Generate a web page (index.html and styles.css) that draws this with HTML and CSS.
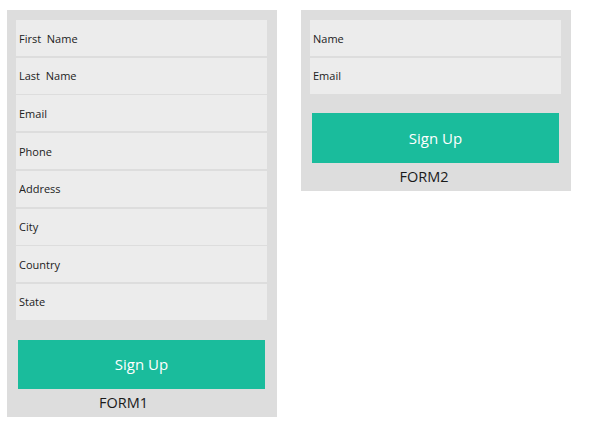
FILE: index.html
```html
<!DOCTYPE html>
<html>
<head>
<meta charset="utf-8">
<link rel="stylesheet" href="styles.css">
</head>
<body>
<div class="page">
  <form class="panel">
    <div class="fields">
      <input class="field" type="text" placeholder="First  Name">
      <input class="field" type="text" placeholder="Last  Name">
      <input class="field" type="text" placeholder="Email">
      <input class="field" type="text" placeholder="Phone">
      <input class="field" type="text" placeholder="Address">
      <input class="field" type="text" placeholder="City">
      <input class="field" type="text" placeholder="Country">
      <input class="field" type="text" placeholder="State">
    </div>
    <button class="signup signup-tall" type="button">Sign Up</button>
    <div class="caption caption-one">FORM1</div>
  </form>
  <form class="panel">
    <div class="fields">
      <input class="field" type="text" placeholder="Name">
      <input class="field" type="text" placeholder="Email">
    </div>
    <button class="signup signup-short" type="button">Sign Up</button>
    <div class="caption caption-two">FORM2</div>
  </form>
</div>
</body>
</html>
```
FILE: styles.css
```css
html, body {
  margin: 0;
  padding: 0;
  background: #ffffff;
  font-family: "Open Sans", "Liberation Sans", sans-serif;
}

.page {
  display: flex;
  align-items: flex-start;
  gap: 24px;
  padding: 10px 0 0 7px;
}

.panel {
  width: 270px;
  box-sizing: border-box;
  background: #dddddd;
  padding: 10px 10px 0 9px;
  display: flex;
  flex-direction: column;
  margin: 0;
}

.fields {
  display: flex;
  flex-direction: column;
  gap: 1.714px;
}

.field {
  display: block;
  width: 100%;
  height: 36px;
  box-sizing: border-box;
  border: none;
  outline: none;
  margin: 0;
  padding: 0 0 0 3px;
  background: #ececec;
  font-family: "Open Sans", "Liberation Sans", sans-serif;
  font-size: 11px;
  color: #222222;
}

.field::placeholder {
  color: #222222;
  opacity: 1;
}

.signup {
  display: block;
  margin: 0 2px;
  border: none;
  background: #1abc9c;
  color: #ffffff;
  font-family: "Open Sans", "Liberation Sans", sans-serif;
  font-size: 15px;
  padding: 0;
  cursor: pointer;
}

.signup-tall {
  margin-top: 20px;
  height: 49px;
}

.signup-short {
  margin-top: 19px;
  height: 50px;
}

.caption {
  height: 28px;
  line-height: 28px;
  font-size: 14.5px;
  color: #1a1a1a;
  text-align: center;
}

.caption-one {
  padding-right: 36px;
}

.caption-two {
  padding-right: 23px;
}
```
